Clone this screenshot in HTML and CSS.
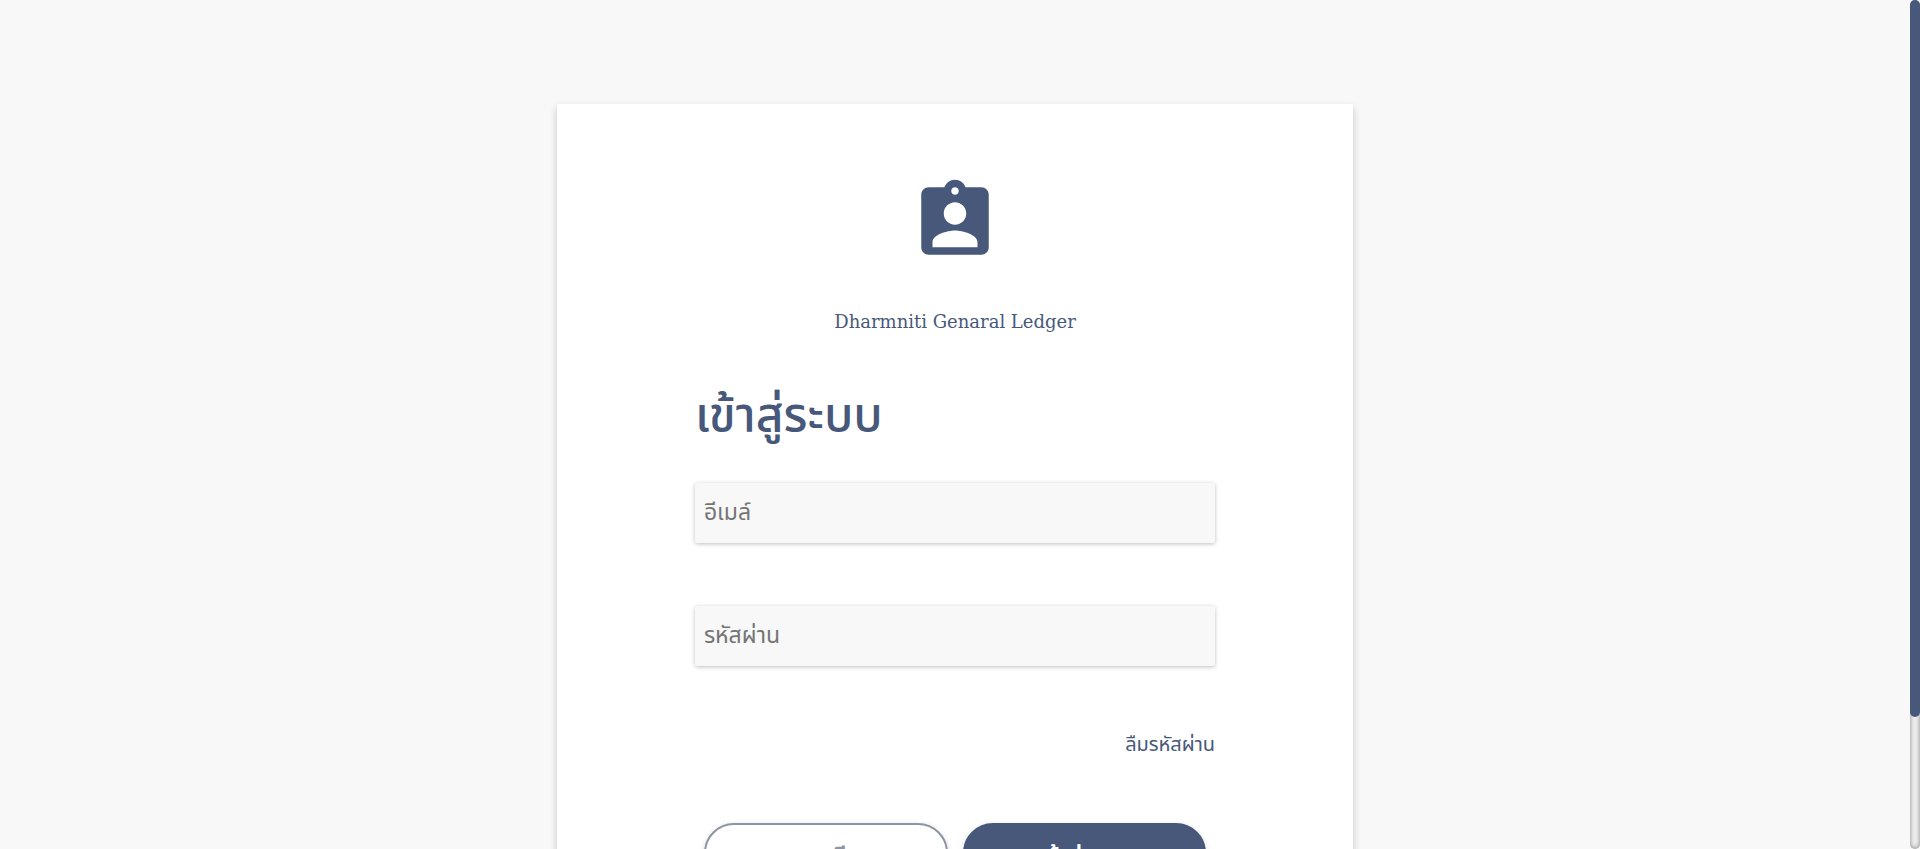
FILE: index.html
```html
<!DOCTYPE html>
<html lang="th">
<head>
<meta charset="utf-8">
<title>Dharmniti Genaral Ledger</title>
<meta name="viewport" content="width=device-width, initial-scale=1">
<link rel="stylesheet" href="styles.css">
</head>
<body>
<div class="shell">
  <div class="page">
    <main class="card">
      <header class="brand">
        <svg class="brand-icon" viewBox="0 0 24 24" aria-hidden="true"><path d="M19 3h-4.180C14.400 1.840 13.300 1 12 1c-1.300 0-2.400.84-2.820 2H5c-1.100 0-2 .9-2 2v14c0 1.100.9 2 2 2h14c1.100 0 2-.9 2-2V5c0-1.100-.9-2-2-2zm-7 0c.55 0 1 .45 1 1s-.45 1-1 1-1-.45-1-1 .45-1 1-1zm0 4c1.660 0 3 1.340 3 3s-1.340 3-3 3-3-1.340-3-3 1.340-3 3-3zm6 12H6v-1.400c0-2 4-3.100 6-3.100s6 1.100 6 3.100V19z"/></svg>
        <p class="brand-name">Dharmniti Genaral Ledger</p>
      </header>
      <form class="login">
        <h1 class="title">เข้าสู่ระบบ</h1>
        <input class="field" type="email" placeholder="อีเมล์" aria-label="อีเมล์">
        <input class="field" type="password" placeholder="รหัสผ่าน" aria-label="รหัสผ่าน">
        <a class="forgot" href="#">ลืมรหัสผ่าน</a>
        <div class="actions">
          <button class="btn btn-outline" type="button">ลงทะเบียน</button>
          <button class="btn btn-solid" type="submit">เข้าสู่ระบบ</button>
        </div>
      </form>
    </main>
  </div>
  <div class="scroll-track" aria-hidden="true"><div class="scroll-thumb"></div></div>
</div>
</body>
</html>
```
FILE: styles.css
```css
* { box-sizing: border-box; }
body {
  margin: 0;
  background: #f8f8f8;
  color: #47587b;
  font-family: "Noto Sans", "Noto Sans Thai", "DejaVu Sans", sans-serif;
}
.shell {
  display: flex;
  height: 100vh;
}
.page {
  flex: 1;
  overflow-y: auto;
  padding: 104px 0 60px;
  scrollbar-width: none;
}
.scroll-track {
  width: 10px;
  background: #f0f0f0;
  border-radius: 10px;
  box-shadow: inset 0 0 5px #808080;
}
.scroll-thumb {
  height: 84.5%;
  background: #47587b;
  border-radius: 10px;
}
.card {
  width: 41.65%;
  min-width: 360px;
  margin: 0 auto;
  padding: 72px 0 60px;
  background: #fff;
  box-shadow: 0 4px 8px rgba(0, 0, 0, 0.2);
}
.brand {
  display: flex;
  flex-direction: column;
  align-items: center;
}
.brand-icon {
  width: 90px;
  height: 90px;
  fill: #47587b;
}
.brand-name {
  margin: 40px 0 0;
  font-family: "DejaVu Serif", serif;
  font-size: 18px;
  line-height: 32px;
}
.login {
  display: flex;
  flex-direction: column;
  width: 65.4%;
  margin: 0 auto;
}
.title {
  margin: 43px 0 38px;
  font-size: 48px;
  font-weight: 500;
  line-height: 64px;
}
.field {
  height: 60px;
  margin-bottom: 63px;
  padding: 0 9px 4px;
  border: 0;
  border-radius: 2px;
  background: #f8f8f8;
  box-shadow: 0 1px 4px rgba(0, 0, 0, 0.25);
  color: #47587b;
  font: inherit;
  font-size: 23px;
}
.field::placeholder { color: #757575; }
.forgot {
  align-self: flex-end;
  color: #47587b;
  font-size: 20px;
  line-height: 30px;
  text-decoration: none;
}
.actions {
  display: flex;
  gap: 15px;
  padding: 0 9px;
  margin-top: 64px;
}
.btn {
  flex: 1;
  height: 60px;
  padding: 3px 12px 0;
  border: 2px solid #47587b;
  border-radius: 30px;
  font: inherit;
  font-size: 22px;
  font-weight: 700;
  box-shadow: 0 2px 6px rgba(0, 0, 0, 0.15);
}
.btn-outline {
  border-color: #8e94a3;
  background: #fff;
  color: #8e94a3;
}
.btn-solid {
  background: #47587b;
  color: #fff;
}
```
